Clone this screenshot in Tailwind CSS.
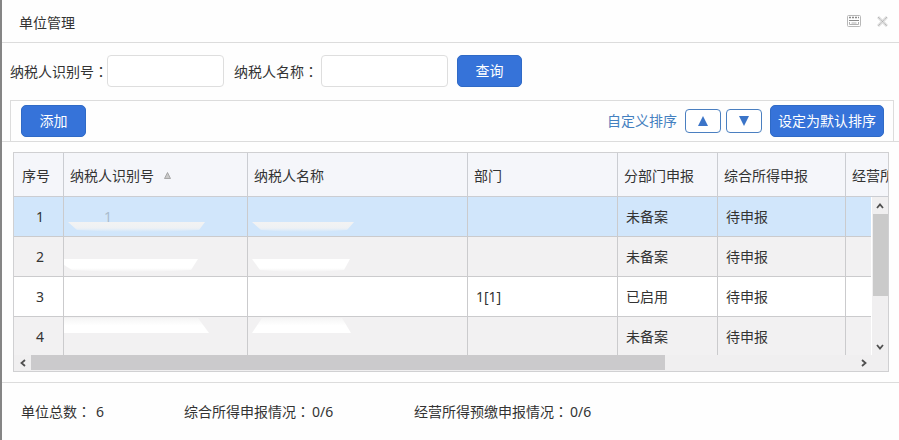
<!DOCTYPE html>
<html lang="zh-CN">
<head>
  <meta charset="UTF-8" />
  <meta name="viewport" content="width=device-width, initial-scale=1.0" />
  <title>单位管理</title>
  <script src="https://cdn.jsdelivr.net/npm/@tailwindcss/browser@4"></script>
</head>
<body class="min-h-screen border-l-2 border-[#858585] bg-[#fefefe] text-sm text-[#333] font-['Noto_Sans','Noto_Sans_CJK_SC',sans-serif]">

  <!-- title bar -->
  <header class="flex h-[43px] items-center justify-between border-b border-[#dcdcdc] pl-[17px] pr-[11px]">
    <h1 class="pt-1">单位管理</h1>
    <div class="flex items-center gap-4">
      <button type="button" aria-label="最大化">
        <svg width="14" height="12" viewBox="0 0 14 12" fill="none">
          <rect x="0.5" y="0.5" width="13" height="11" rx="1" stroke="#b8b8b8" />
          <path d="M2 2.500h10" stroke="#8a8a8a" stroke-width="1.500" stroke-dasharray="2 1" />
          <path d="M2 5.500h10" stroke="#8a8a8a" />
          <path d="M2.500 7v2.500h9V7M4.500 8h5" stroke="#b0b0b0" />
        </svg>
      </button>
      <button type="button" aria-label="关闭">
        <svg width="11" height="11" viewBox="0 0 11 11" fill="none">
          <path d="M1 1l9 9M10 1l-9 9" stroke="#dedede" stroke-width="3" />
          <path d="M1 1l9 9M10 1l-9 9" stroke="#aaa" stroke-dasharray="1 1" />
        </svg>
      </button>
    </div>
  </header>

  <main>
    <!-- search -->
    <form class="flex h-[57px] items-center pb-1 pl-2 pt-[3px]">
      <label for="taxpayer-id" class="w-[97px] whitespace-nowrap">纳税人识别号<span lang="zh-TW" class="font-['Noto_Sans_CJK_TC']">：</span></label>
      <input id="taxpayer-id" type="text" class="h-8 w-[117px] rounded border border-[#dedede] bg-white px-2" />
      <label for="taxpayer-name" class="ml-[10px] w-[87px] whitespace-nowrap">纳税人名称<span lang="zh-TW" class="font-['Noto_Sans_CJK_TC']">：</span></label>
      <input id="taxpayer-name" type="text" class="h-8 w-[127px] rounded border border-[#dedede] bg-white px-2" />
      <button type="button" class="ml-[9px] h-8 w-[65px] rounded-[5px] border border-[#2f6ac6] bg-[#3673d9] text-white">查询</button>
    </form>

    <!-- toolbar -->
    <div class="border-b border-[#dcdcdc] pl-2 pr-[5px]">
      <div class="flex h-[41px] items-center border-x border-t border-[#dcdcdc] pl-[10px] pr-[9px]">
        <button type="button" class="h-8 w-[65px] rounded-[5px] border border-[#2f6ac6] bg-[#3673d9] text-white">添加</button>
        <span class="ml-auto mr-2 text-[#4480c0]">自定义排序</span>
        <button type="button" aria-label="上移" class="mr-[5px] flex h-6 w-9 items-center justify-center rounded border border-[#4a7fc0] bg-white">
          <svg width="10" height="10" viewBox="0 0 10 10"><path d="M5 0l5 10H0z" fill="#3b74c8" /></svg>
        </button>
        <button type="button" aria-label="下移" class="mr-2 flex h-6 w-9 items-center justify-center rounded border border-[#4a7fc0] bg-white">
          <svg width="10" height="10" viewBox="0 0 10 10"><path d="M0 0h10L5 10z" fill="#3b74c8" /></svg>
        </button>
        <button type="button" class="h-8 w-[114px] whitespace-nowrap rounded-[5px] border border-[#2f6ac6] bg-[#3673d9] text-white">设定为默认排序</button>
      </div>
    </div>

    <!-- grid -->
    <div class="relative ml-[11px] mr-[10px] mt-[10px] border border-[#d0d0d2]">
      <div class="h-[202px] overflow-hidden">
        <table class="w-[1032px] table-fixed border-separate border-spacing-0 whitespace-nowrap">
          <colgroup>
            <col class="w-[50px]" />
            <col class="w-[184px]" />
            <col class="w-[220px]" />
            <col class="w-[150px]" />
            <col class="w-[100px]" />
            <col class="w-[128px]" />
            <col class="w-[200px]" />
          </colgroup>
          <thead>
            <tr class="h-11 bg-[#f5f6fa] text-left [&>th]:border-b [&>th]:border-r [&>th]:border-[#cbcdd2] [&>th]:px-[6px] [&>th]:pb-0 [&>th]:pt-[2px] [&>th]:font-normal">
              <th scope="col"><span class="pl-[2px]">序号</span></th>
              <th scope="col">
                <span class="flex items-center gap-[10px]">纳税人识别号
                  <svg width="7" height="7" viewBox="0 0 7 7"><path d="M3.5 0.5l3 6h-6z" fill="#c9c9c9" stroke="#999" stroke-width="0.8" /></svg>
                </span>
              </th>
              <th scope="col">纳税人名称</th>
              <th scope="col">部门</th>
              <th scope="col">分部门申报</th>
              <th scope="col">综合所得申报</th>
              <th scope="col">经营所得预缴申报</th>
            </tr>
          </thead>
          <tbody class="[&_td]:border-b [&_td]:border-r [&_td]:border-[#cbcbcd] [&_td]:py-0 [&_td]:pl-2 [&_td:first-child]:pl-[3px]">
            <tr class="h-10 bg-[#d1e6fb]">
              <td class="text-center">1</td>
              <td class="relative">
                <span class="pl-8 text-[#a9bccd]">1</span>
                <svg class="absolute left-1 top-6" width="140" height="12" viewBox="0 0 140 12"><path d="M0 1h137l-6 8q-60 4-122 0z" fill="url(#smudge-grey)" /></svg>
              </td>
              <td class="relative">
                <svg class="absolute left-1 top-6" width="104" height="12" viewBox="0 0 104 12"><path d="M0 1h102l-7 8q-44 4-86 0z" fill="url(#smudge-grey)" /></svg>
              </td>
              <td></td>
              <td>未备案</td>
              <td>待申报</td>
              <td></td>
            </tr>
            <tr class="h-10 bg-[#f2f1f2]">
              <td class="text-center">2</td>
              <td class="relative">
                <svg class="absolute left-0 top-[21px]" width="136" height="15" viewBox="0 0 136 15"><path d="M0 1h134l-7 11q-60 4-119 0L0 7z" fill="url(#smudge-white)" /></svg>
              </td>
              <td class="relative">
                <svg class="absolute left-1 top-[21px]" width="100" height="15" viewBox="0 0 100 15"><path d="M0 1h98l-6 11q-42 4-84 0z" fill="url(#smudge-white)" /></svg>
              </td>
              <td></td>
              <td>未备案</td>
              <td>待申报</td>
              <td></td>
            </tr>
            <tr class="h-10 bg-white">
              <td class="text-center">3</td>
              <td></td>
              <td></td>
              <td>1[1]</td>
              <td>已启用</td>
              <td>待申报</td>
              <td></td>
            </tr>
            <tr class="h-10 bg-[#f2f1f2]">
              <td class="text-center">4</td>
              <td class="relative">
                <svg class="absolute left-0 top-0" width="146" height="16" viewBox="0 0 146 16"><path d="M0 1h134l11 15H0z" fill="url(#smudge-up)" /></svg>
              </td>
              <td class="relative">
                <svg class="absolute left-1 top-0" width="100" height="16" viewBox="0 0 100 16"><path d="M10 1h80l9 15H0z" fill="url(#smudge-up)" /></svg>
              </td>
              <td></td>
              <td>未备案</td>
              <td>待申报</td>
              <td></td>
            </tr>
          </tbody>
        </table>
      </div>

      <!-- vertical scrollbar, below the header row -->
      <div class="absolute right-0 top-11 flex h-[158px] w-[17px] flex-col items-center border-l border-white bg-[#f0eff0]">
        <button type="button" aria-label="向上滚动" class="flex h-[17px] w-full shrink-0 items-center justify-center">
          <svg width="8" height="6" viewBox="0 0 8 6" fill="none"><path d="M1 5l3-3.500l3 3.500" stroke="#505050" stroke-width="1.800" /></svg>
        </button>
        <div class="h-[82px] w-[15px] bg-[#cacaca]"></div>
        <button type="button" aria-label="向下滚动" class="mt-auto flex h-[17px] w-full shrink-0 items-center justify-center">
          <svg width="8" height="6" viewBox="0 0 8 6" fill="none"><path d="M1 1l3 3.500l3-3.500" stroke="#505050" stroke-width="1.800" /></svg>
        </button>
      </div>

      <!-- horizontal scrollbar -->
      <div class="flex h-4 items-center bg-[#f0eff0] pr-4">
        <button type="button" aria-label="向左滚动" class="flex h-full w-[17px] shrink-0 items-center justify-center">
          <svg width="6" height="8" viewBox="0 0 6 8" fill="none"><path d="M5 1l-3.500 3l3.500 3" stroke="#505050" stroke-width="1.800" /></svg>
        </button>
        <div class="h-full grow">
          <div class="h-[15px] w-[77%] bg-[#cbcacc]"></div>
        </div>
        <button type="button" aria-label="向右滚动" class="flex h-full w-[17px] shrink-0 items-center justify-center">
          <svg width="6" height="8" viewBox="0 0 6 8" fill="none"><path d="M1 1l3.500 3l-3.500 3" stroke="#505050" stroke-width="1.800" /></svg>
        </button>
      </div>
    </div>
  </main>

  <!-- totals -->
  <footer class="mt-[10px] flex h-[58px] items-center border-t border-[#dcdcdc] pl-[19px]">
    <p class="w-[163px]">单位总数<span lang="zh-TW" class="mr-[5px] font-['Noto_Sans_CJK_TC']">：</span>6</p>
    <p class="w-[230px]">综合所得申报情况<span lang="zh-TW" class="mr-[2px] font-['Noto_Sans_CJK_TC']">：</span>0/6</p>
    <p>经营所得预缴申报情况<span lang="zh-TW" class="mr-[2px] font-['Noto_Sans_CJK_TC']">：</span>0/6</p>
  </footer>

  <!-- shared fills for the blanked-out values -->
  <svg class="absolute size-0" aria-hidden="true">
    <defs>
      <linearGradient id="smudge-grey" x1="0" y1="0" x2="0" y2="1">
        <stop offset="0" stop-color="#f3f3f3" />
        <stop offset="0.600" stop-color="#eef1f4" />
        <stop offset="1" stop-color="#d1e6fb" />
      </linearGradient>
      <linearGradient id="smudge-white" x1="0" y1="0" x2="0" y2="1">
        <stop offset="0" stop-color="#fff" />
        <stop offset="0.700" stop-color="#fff" />
        <stop offset="1" stop-color="#f2f1f2" />
      </linearGradient>
      <linearGradient id="smudge-up" x1="0" y1="0" x2="0" y2="1">
        <stop offset="0" stop-color="#f5f5f5" />
        <stop offset="0.500" stop-color="#fff" />
        <stop offset="1" stop-color="#fff" />
      </linearGradient>
    </defs>
  </svg>
</body>
</html>
